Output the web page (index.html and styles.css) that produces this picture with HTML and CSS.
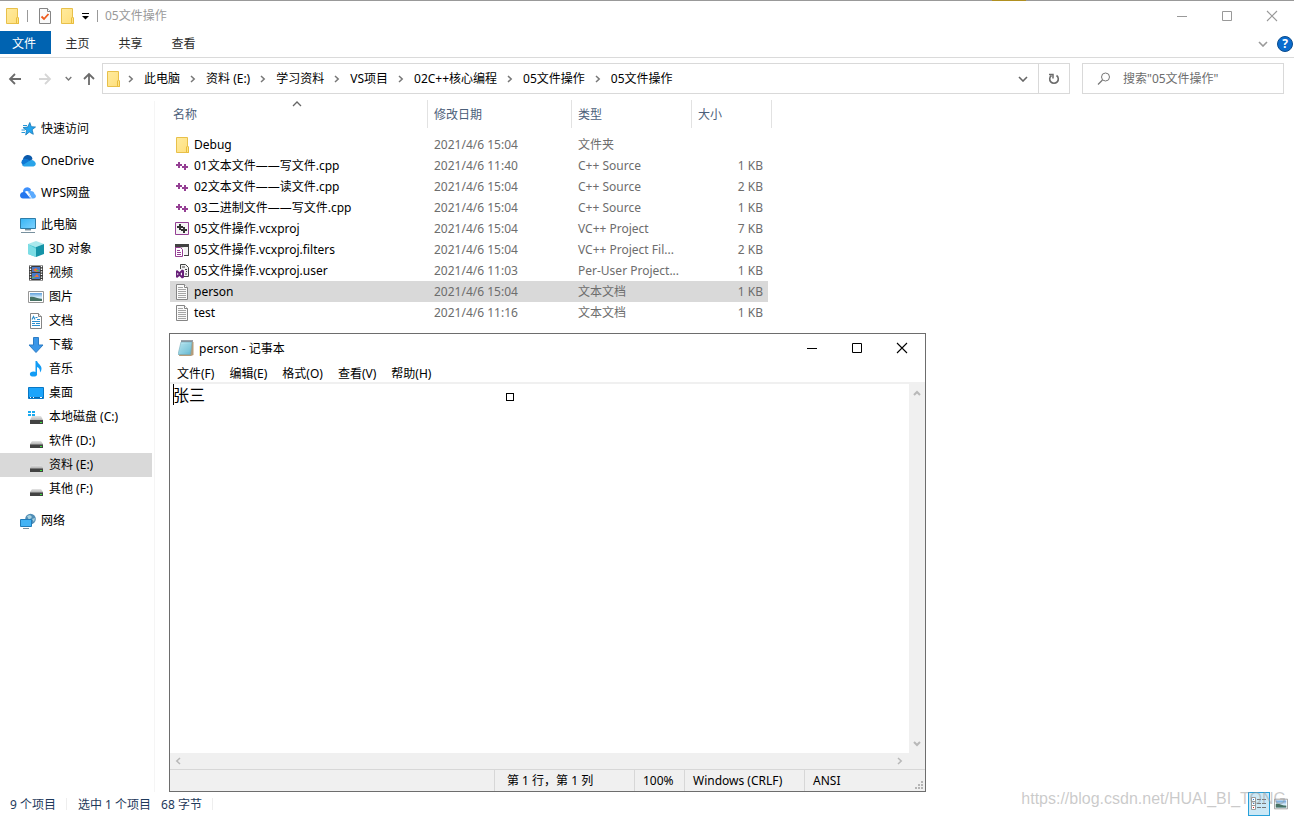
FILE: index.html
```
<!DOCTYPE html>
<html lang="zh-CN">
<head>
<meta charset="utf-8">
<title>05文件操作</title>
<link rel="stylesheet" href="styles.css">
</head>
<body>
<svg class="defs" aria-hidden="true">
  <defs>
    <linearGradient id="gFolder" x1="0" y1="0" x2="1" y2="1"><stop offset="0" stop-color="#ffeb9e"/><stop offset="1" stop-color="#ffdf7c"/></linearGradient>
    <linearGradient id="gSky" x1="0" y1="0" x2="1" y2="1"><stop offset="0" stop-color="#36b4f5"/><stop offset="1" stop-color="#7fd3ff"/></linearGradient>
    <linearGradient id="gDrive" x1="0" y1="0" x2="0" y2="1"><stop offset="0" stop-color="#e6e6e6"/><stop offset="1" stop-color="#b5b5b5"/></linearGradient>
    <linearGradient id="gPad" x1="0" y1="0" x2="1" y2="1"><stop offset="0" stop-color="#c9eef6"/><stop offset="1" stop-color="#5cb4cf"/></linearGradient>
    <linearGradient id="gPic" x1="0" y1="0" x2="0" y2="1"><stop offset="0" stop-color="#5f9fdb"/><stop offset=".55" stop-color="#d7ecfa"/><stop offset="1" stop-color="#7fb0c9"/></linearGradient>
  </defs>
  <symbol id="folder" viewBox="0 0 16 16"><path d="M1.5.5h11v9.5h1v5.500h-12z" fill="url(#gFolder)" stroke="#e8c04a"/><path d="M11.500 15.500V10l1-1 1 1v5.500z" fill="#ffe487" stroke="#e8bd3e"/></symbol>
  <symbol id="check" viewBox="0 0 16 16"><path d="M2.500.500h8l3 3v12h-11z" fill="#fafafa" stroke="#858585"/><path d="M10.500.500v3h3" fill="#fff" stroke="#858585"/><path d="M4.500 8.500l2.500 2.500 4.500-5" fill="none" stroke="#ee5a1c" stroke-width="1.800"/></symbol>
  <symbol id="star" viewBox="0 0 16 16"><path d="M9.800 1.500l1.500 4.200 4.200.300-3.400 2.700 1.200 4.600-4-2.300-3.600 3 .8-4.800L3 6.600l4.700-.500z" fill="#25a6ef" stroke="#1678b8" stroke-width=".8"/><path d="M3 4.500h4M1.500 9h3.500M1.500 11.500h3.500" stroke="#2597d8"/></symbol>
  <symbol id="onedrive" viewBox="0 0 16 16"><path d="M3 7.500A4.800 4.800 0 0 1 12.500 6l-4 4z" fill="#0c5aab"/><path d="M3.500 12.500a3.600 3.600 0 0 1 0-6.500c2-.8 4.500 0 6.500 2L6 12.800z" fill="#1078d4"/><path d="M2 12.500l8-5a3.500 3.500 0 0 1 5 1.500c1.500 1.500.8 4-1.500 4.500H4z" fill="#29a4e9"/></symbol>
  <symbol id="wps" viewBox="0 0 16 16"><path d="M3.500 8.500a4.200 4.200 0 0 1 7.500-4l-1 2.500-4-1-1 4z" fill="#3e91fc"/><path d="M8 7c2-2 6.500-1 6.500 2 2.500 1.500 1.500 4.500-1 4.500h-3z" fill="#5baafe"/><path d="M0 10C.5 7 4 6 6 8l4.500 5.500H3C1 13.500 0 12 0 10z" fill="#2476ee"/><path d="M5 7c2-.5 3 0 4 1.500l2.500 5" stroke="#fff" stroke-width=".8" fill="none"/></symbol>
  <symbol id="pc" viewBox="0 0 16 16"><path d="M.500 1.500h15v10H.500z" fill="url(#gSky)" stroke="#2e7da8"/><path d="M5 12.500h6M1 15.500h14" stroke="#78909e"/><path d="M5 13.500h6" stroke="#c3ced4"/></symbol>
  <symbol id="cube" viewBox="0 0 16 16"><path d="M0 3l8-3 8 3-8 3z" fill="#aae9ed"/><path d="M0 3l8 3v10l-8-3z" fill="#55ccd7"/><path d="M16 3L8 6v10l8-3z" fill="#1594a8"/><path d="M0 3l8 5v8l-8-3z" fill="#7cdde5"/></symbol>
  <symbol id="film" viewBox="0 0 16 16"><path d="M1 .5h14v15H1z" fill="#3a3a3a"/><path d="M4 2h8v5H4z" fill="#4979c9"/><path d="M4 8h8v6H4z" fill="#477bcb"/><path d="M5 5l3-2 3 3-3 1zM6 12l3-3 2 3z" fill="#ee7338"/><path d="M8 5h3v1H8zM4 12h3v1H4z" fill="#62b456"/><path d="M2.500 1v14M13.500 1v14" stroke="#fff" stroke-width="1.400" stroke-dasharray="1.300 1.300"/></symbol>
  <symbol id="picture" viewBox="0 0 16 16"><path d="M.500 2.500h15v11H.500z" fill="#fff" stroke="#969696"/><path d="M2 4h12v8H2z" fill="url(#gPic)"/><path d="M2 8c4-1 7 2 12 2v2H2z" fill="#477264"/></symbol>
  <symbol id="doc" viewBox="0 0 16 16"><path d="M2.500.500h8l3 3v12h-11z" fill="#fff" stroke="#858585"/><path d="M10.500.500v3h3" fill="#eee" stroke="#858585"/><path d="M4 6.500l1.500-3L7 6.500M7.500 4.500h2M9 6.500h3M4 8.500h8M4 10.500h3M8 10.500h4M4 12.500h8" fill="none" stroke="#2e8fce" stroke-width="1.200"/></symbol>
  <symbol id="down" viewBox="0 0 16 16"><path d="M5.500.500h5V8h4.500l-7 7.500L1 8h4.500z" fill="#3b97e8" stroke="#2c7cc5"/></symbol>
  <symbol id="note" viewBox="0 0 16 16"><ellipse cx="5.500" cy="13" rx="3.600" ry="2.600" fill="#129cf5"/><path d="M7.500 0h1.500c1 3 4.500 4 4.500 7.500 0 2-.8 3-1.500 4 .3-3-.8-4.500-3-5.500v7H7.500z" fill="#129cf5"/></symbol>
  <symbol id="desktop" viewBox="0 0 16 16"><path d="M.500 2.500h15v11H.500z" fill="#1ba4fb" stroke="#0877c4"/><path d="M1 12.500h14" stroke="#0a64a8"/><path d="M2 12.500h1M5 12.500h1M12 12.500h2" stroke="#fff"/></symbol>
  <symbol id="drive" viewBox="0 0 16 16"><path d="M4 8h9l2 3H2z" fill="url(#gDrive)"/><path d="M2 11h13v4H2z" fill="#424242"/><path d="M2 11.500h13" stroke="#7a7a7a"/><path d="M12 13h2v1h-2z" fill="#38e23c"/></symbol>
  <symbol id="drivec" viewBox="0 0 16 16"><path d="M4 7h9l2 4H2z" fill="url(#gDrive)"/><path d="M2 11h13v4H2z" fill="#424242"/><path d="M12 13h2v1h-2z" fill="#38e23c"/><path d="M0 1h7v6H0z" fill="#fff"/><path d="M0 2h3v2H0zM4 2h3v2H4zM0 5h3v2H0zM4 5h3v2H4z" fill="#1aaaf0"/></symbol>
  <symbol id="network" viewBox="0 0 16 16"><circle cx="10.500" cy="6" r="5.300" fill="#508db5"/><path d="M7 3l3-1 2 2-3 3zM12 6l3-1-1 4z" fill="#a7d1df"/><path d="M.500 6.500h11v7H.500z" fill="#42b3f5" stroke="#217cb9"/><path d="M3 15.500h6" stroke="#78909e"/></symbol>
  <symbol id="cpp" viewBox="0 0 16 16"><path d="M4 4v6M1 7h6M10 6v6M7 9h6" stroke="#953f94" stroke-width="2" fill="none"/></symbol>
  <symbol id="vcx" viewBox="0 0 16 16"><path d="M.500 1.500h13v12H.500z" fill="#f4f4f4" stroke="#953f94"/><path d="M5 3v6M2 6h6M9 6v6M6 9h6" stroke="#333" stroke-width="2"/></symbol>
  <symbol id="filters" viewBox="0 0 16 16"><path d="M0 2h14v12H9V6H0z" fill="#424242"/><path d="M1 5h12v8H9V6z" fill="#f3f3f3"/><path d="M.500 5.500h5l2 2v7h-7z" fill="#fff" stroke="#953f94"/><path d="M2 8.500h3M2 10.500h4M2 12.500h4" stroke="#953f94"/></symbol>
  <symbol id="vsuser" viewBox="0 0 16 16"><path d="M5.500 6V1.500h5l3 3v9H8" fill="#f1f1f1" stroke="#424242"/><path d="M7 4h3M10 6.500h2M8 8.500h1M11 8.500h1M10 11h2" stroke="#424242"/><path d="M1 8l1-1 2.500 2L7 6.500l2 1v7l-2 1-2.500-2.500L2 15l-1-1zM2.300 9.800v2.500l1.300-1.300zM7 9.300L5.500 11 7 12.700z" fill="#68217a" fill-rule="evenodd"/></symbol>
  <symbol id="txt" viewBox="0 0 16 16"><path d="M1.500.500h8l3 3v12h-11z" fill="#fafafa" stroke="#858585"/><path d="M9.500.500v3h3" fill="#fff" stroke="#858585"/><path d="M3 3.500h5M3 5.500h8M3 7.500h8M3 9.500h8M3 11.500h8M3 13.500h8" stroke="#a5a5a5"/></symbol>
  <symbol id="notepad" viewBox="0 0 16 16"><path d="M4 2h11.500v13L13 16H1z" fill="#b59c7a"/><path d="M3 2h11l-1.500 12.500H0z" fill="url(#gPad)" stroke="#72a9b8" stroke-width=".6"/><path d="M3.500 1h11" stroke="#345" stroke-width="2" stroke-dasharray="1 1"/><path d="M3 5h9.500M2.700 7h9.500M2.300 9h9.500M2 11h9.500" stroke="#8accdc" stroke-width=".6"/></symbol>
  <symbol id="chev-r" viewBox="0 0 6 8"><path d="M1 1l3.200 3L1 7" fill="none" stroke="currentColor" stroke-width="1.500"/></symbol>
  <symbol id="chev-l" viewBox="0 0 6 8"><path d="M5 1L1.800 4 5 7" fill="none" stroke="currentColor" stroke-width="1.500"/></symbol>
  <symbol id="chev-d" viewBox="0 0 10 6"><path d="M1 1l4 4 4-4" fill="none" stroke="currentColor" stroke-width="1.600"/></symbol>
  <symbol id="chev-u" viewBox="0 0 10 6"><path d="M1 5l4-4 4 4" fill="none" stroke="currentColor" stroke-width="1.300"/></symbol>
  <symbol id="scr-u" viewBox="0 0 8 6"><path d="M1 5l3-3 3 3" fill="none" stroke="currentColor" stroke-width="2"/></symbol>
  <symbol id="scr-d" viewBox="0 0 8 6"><path d="M1 1l3 3 3-3" fill="none" stroke="currentColor" stroke-width="2"/></symbol>
  <symbol id="min" viewBox="0 0 12 12"><path d="M1 6.500h10" stroke="currentColor"/></symbol>
  <symbol id="max" viewBox="0 0 12 12"><path d="M1.500 1.500h9v9h-9z" fill="none" stroke="currentColor"/></symbol>
  <symbol id="close" viewBox="0 0 12 12"><path d="M1 1l10 10M11 1L1 11" stroke="currentColor" stroke-width="1.100"/></symbol>
</svg>

<div class="explorer">
  <header class="titlebar">
    <svg class="ic"><use href="#folder"/></svg>
    <i class="tick"></i>
    <button class="plain q1" aria-label="属性"><svg class="ic"><use href="#check"/></svg></button>
    <button class="plain q2" aria-label="新建文件夹"><svg class="ic"><use href="#folder"/></svg></button>
    <button class="plain q3" aria-label="自定义快速访问工具栏"><svg width="7" height="7" viewBox="0 0 7 7"><path d="M0 .500h7" stroke="#000"/><path d="M0 3h7L3.500 6.500z"/></svg></button>
    <i class="tick"></i>
    <h1>05文件操作</h1>
    <div class="caption">
      <button class="plain" aria-label="最小化"><svg class="cap"><use href="#min"/></svg></button>
      <button class="plain" aria-label="最大化"><svg class="cap"><use href="#max"/></svg></button>
      <button class="plain" aria-label="关闭"><svg class="cap"><use href="#close"/></svg></button>
    </div>
    <span class="accent"></span>
  </header>

  <nav class="tabs">
    <button class="plain tab file">文件</button>
    <button class="plain tab">主页</button>
    <button class="plain tab">共享</button>
    <button class="plain tab">查看</button>
    <div class="tabs-end">
      <button class="plain" aria-label="展开功能区"><svg class="cd light"><use href="#chev-d"/></svg></button>
      <button class="plain help" aria-label="帮助">?</button>
    </div>
  </nav>

  <div class="address">
    <div class="nav">
      <button class="plain" aria-label="后退"><svg width="14" height="12" viewBox="0 0 14 12"><path d="M7 1L2 6l5 5M2 6h11" fill="none" stroke="#6b6b6b" stroke-width="1.800"/></svg></button>
      <button class="plain" aria-label="前进"><svg width="14" height="12" viewBox="0 0 14 12"><path d="M7 1l5 5-5 5M12 6H1" fill="none" stroke="#d6d6d6" stroke-width="1.800"/></svg></button>
      <button class="plain" aria-label="最近位置"><svg width="7" height="5" viewBox="0 0 10 6"><path d="M1 1l4 4 4-4" fill="none" stroke="#777" stroke-width="2"/></svg></button>
      <button class="plain" aria-label="上移"><svg width="12" height="14" viewBox="0 0 12 14"><path d="M1 7l5-5 5 5M6 2v11" fill="none" stroke="#6b6b6b" stroke-width="1.800"/></svg></button>
    </div>
    <div class="path">
      <svg class="ic"><use href="#folder"/></svg>
      <svg class="cr"><use href="#chev-r"/></svg><a href="#">此电脑</a>
      <svg class="cr"><use href="#chev-r"/></svg><a href="#">资料 (E:)</a>
      <svg class="cr"><use href="#chev-r"/></svg><a href="#">学习资料</a>
      <svg class="cr"><use href="#chev-r"/></svg><a href="#">VS项目</a>
      <svg class="cr"><use href="#chev-r"/></svg><a href="#">02C++核心编程</a>
      <svg class="cr"><use href="#chev-r"/></svg><a href="#">05文件操作</a>
      <svg class="cr"><use href="#chev-r"/></svg><a href="#">05文件操作</a>
      <button class="plain drop" aria-label="以前的位置"><svg class="cd"><use href="#chev-d"/></svg></button>
      <button class="plain refresh" aria-label="刷新"><svg width="12" height="12" viewBox="0 0 12 12"><path d="M3.500 2.500A4.300 4.300 0 1 0 8.500 2.500" fill="none" stroke="#6b6b6b" stroke-width="1.600"/><path d="M1 1.500h4v4" fill="none" stroke="#6b6b6b" stroke-width="1.500"/></svg></button>
    </div>
    <label class="search">
      <svg width="14" height="14" viewBox="0 0 14 14"><circle cx="8.500" cy="5" r="4" fill="none" stroke="#777"/><path d="M5.500 8L1 12.500" stroke="#777" stroke-width="1.200"/></svg>
      <input type="text" aria-label="搜索" placeholder='搜索"05文件操作"'>
    </label>
  </div>

  <div class="body">
    <aside class="tree">
      <a href="#"><svg class="ic"><use href="#star"/></svg>快速访问</a>
      <a class="gap" href="#"><svg class="ic"><use href="#onedrive"/></svg>OneDrive</a>
      <a class="gap" href="#"><svg class="ic"><use href="#wps"/></svg>WPS网盘</a>
      <a class="gap" href="#"><svg class="ic"><use href="#pc"/></svg>此电脑</a>
      <a class="sub" href="#"><svg class="ic"><use href="#cube"/></svg>3D 对象</a>
      <a class="sub" href="#"><svg class="ic"><use href="#film"/></svg>视频</a>
      <a class="sub" href="#"><svg class="ic"><use href="#picture"/></svg>图片</a>
      <a class="sub" href="#"><svg class="ic"><use href="#doc"/></svg>文档</a>
      <a class="sub" href="#"><svg class="ic"><use href="#down"/></svg>下载</a>
      <a class="sub" href="#"><svg class="ic"><use href="#note"/></svg>音乐</a>
      <a class="sub" href="#"><svg class="ic"><use href="#desktop"/></svg>桌面</a>
      <a class="sub" href="#"><svg class="ic"><use href="#drivec"/></svg>本地磁盘 (C:)</a>
      <a class="sub" href="#"><svg class="ic"><use href="#drive"/></svg>软件 (D:)</a>
      <a class="sub on" href="#"><svg class="ic"><use href="#drive"/></svg>资料 (E:)</a>
      <a class="sub" href="#"><svg class="ic"><use href="#drive"/></svg>其他 (F:)</a>
      <a class="gap" href="#"><svg class="ic"><use href="#network"/></svg>网络</a>
    </aside>
    <main class="files">
      <table>
        <colgroup><col class="c-name"><col class="c-date"><col class="c-type"><col class="c-size"></colgroup>
        <thead><tr><th>名称<svg class="sort"><use href="#chev-u"/></svg></th><th>修改日期</th><th>类型</th><th>大小</th></tr></thead>
        <tbody>
          <tr><td><div class="name"><svg class="ic"><use href="#folder"/></svg>Debug</div></td><td>2021/4/6 15:04</td><td>文件夹</td><td></td></tr>
          <tr><td><div class="name"><svg class="ic"><use href="#cpp"/></svg>01文本文件——写文件.cpp</div></td><td>2021/4/6 11:40</td><td>C++ Source</td><td>1 KB</td></tr>
          <tr><td><div class="name"><svg class="ic"><use href="#cpp"/></svg>02文本文件——读文件.cpp</div></td><td>2021/4/6 15:04</td><td>C++ Source</td><td>2 KB</td></tr>
          <tr><td><div class="name"><svg class="ic"><use href="#cpp"/></svg>03二进制文件——写文件.cpp</div></td><td>2021/4/6 15:04</td><td>C++ Source</td><td>1 KB</td></tr>
          <tr><td><div class="name"><svg class="ic"><use href="#vcx"/></svg>05文件操作.vcxproj</div></td><td>2021/4/6 15:04</td><td>VC++ Project</td><td>7 KB</td></tr>
          <tr><td><div class="name"><svg class="ic"><use href="#filters"/></svg>05文件操作.vcxproj.filters</div></td><td>2021/4/6 15:04</td><td>VC++ Project Fil...</td><td>2 KB</td></tr>
          <tr><td><div class="name"><svg class="ic"><use href="#vsuser"/></svg>05文件操作.vcxproj.user</div></td><td>2021/4/6 11:03</td><td>Per-User Project...</td><td>1 KB</td></tr>
          <tr class="on"><td><div class="name"><svg class="ic"><use href="#txt"/></svg>person</div></td><td>2021/4/6 15:04</td><td>文本文档</td><td>1 KB</td></tr>
          <tr><td><div class="name"><svg class="ic"><use href="#txt"/></svg>test</div></td><td>2021/4/6 11:16</td><td>文本文档</td><td>1 KB</td></tr>
        </tbody>
      </table>
    </main>
  </div>

  <footer class="status">
    <span>9 个项目</span><i></i><span>选中 1 个项目</span><span class="bytes">68 字节</span><i></i>
    <div class="views">
      <button class="plain view on" aria-label="详细信息"><svg width="16" height="16" viewBox="0 0 16 16"><path d="M.500 1.500h4v12h-4zM.500 5.500h4M.500 9.500h4" fill="#fff" stroke="#999"/><path d="M2 3.500h1M2 7.500h1" stroke="#247de0"/><path d="M2 11.500h1" stroke="#d22"/><path d="M6 3.500h4M11 3.500h4M6 7.500h4M11 7.500h4M6 11.500h4M11 11.500h4" stroke="#777"/></svg></button>
      <button class="plain view" aria-label="大缩略图"><svg class="thumb"><use href="#picture"/></svg></button>
    </div>
  </footer>
</div>

<section class="notepad">
  <header class="np-title">
    <svg class="ic"><use href="#notepad"/></svg>
    <h2>person - 记事本</h2>
    <div class="caption">
      <button class="plain" aria-label="最小化"><svg class="cap"><use href="#min"/></svg></button>
      <button class="plain" aria-label="最大化"><svg class="cap"><use href="#max"/></svg></button>
      <button class="plain" aria-label="关闭"><svg class="cap"><use href="#close"/></svg></button>
    </div>
  </header>
  <nav class="np-menu">
    <button class="plain">文件(F)</button><button class="plain">编辑(E)</button><button class="plain">格式(O)</button><button class="plain">查看(V)</button><button class="plain">帮助(H)</button>
  </nav>
  <div class="np-edit">
    <textarea aria-label="文本" spellcheck="false">张三</textarea>
    <span class="caret"></span>
    <span class="pointer"></span>
    <div class="vscroll"><svg class="sv"><use href="#scr-u"/></svg><svg class="sv"><use href="#scr-d"/></svg></div>
  </div>
  <div class="hscroll"><svg class="sr"><use href="#chev-l"/></svg><svg class="sr"><use href="#chev-r"/></svg></div>
  <footer class="np-status">
    <span class="s-pos">第 1 行，第 1 列</span><span class="s-zoom">100%</span><span class="s-eol">Windows (CRLF)</span><span class="s-enc">ANSI</span>
    <svg class="grip" width="9" height="9" viewBox="0 0 9 9"><path d="M6 0h2v2H6zM3 3h2v2H3zM6 3h2v2H6zM0 6h2v2H0zM3 6h2v2H3zM6 6h2v2H6z" fill="#b5b5b5"/></svg>
  </footer>
</section>
<div class="watermark">https://blog.csdn.net/HUAI_BI_TONG</div>
</body>
</html>
```
FILE: styles.css
```
* { box-sizing: border-box; }
body {
  margin: 0;
  background: #fff;
  color: #000;
  font: 12px/16px "Noto Sans", "Noto Sans CJK SC", sans-serif;
  overflow: hidden;
}
h1, h2 { margin: 0; font-size: 12px; font-weight: 400; }
a { color: inherit; text-decoration: none; }
svg { display: block; flex: none; }
.defs { position: absolute; width: 0; height: 0; }
.plain {
  display: flex;
  align-items: center;
  justify-content: center;
  margin: 0;
  padding: 0;
  border: 0;
  background: none;
  color: inherit;
  font: inherit;
}
.ic { width: 16px; height: 16px; }
.cap { width: 12px; height: 12px; }
.cd { width: 10px; height: 6px; color: #666; }
.cr { width: 6px; height: 8px; color: #777; }

.explorer { display: flex; flex-direction: column; height: 100vh; }

.titlebar {
  position: relative;
  display: flex;
  align-items: center;
  height: 31px;
  padding: 0 0 1px 5px;
  border-top: 1px solid #999;
  color: #999;
}
.titlebar .tick { width: 1px; height: 12px; background: #999; }
.titlebar .ic + .tick { margin-left: 6px; }
.q1 { margin-left: 9px; }
.q2 { margin-left: 7px; }
.q3 { margin: 2px 8px 0 6px; }
.titlebar h1 { margin-left: 7px; }
.accent { position: absolute; top: -1px; right: 268px; width: 34px; height: 1px; background: #b09020; }
.caption { display: flex; align-self: stretch; margin-left: auto; }
.caption button { width: 45px; }

.tabs { display: flex; height: 27px; border-bottom: 1px solid #dadada; color: #2b2b2b; }
.tab { width: 53px; height: 23px; padding-top: 2px; }
.tab.file { width: 51px; padding-right: 3px; background: #0063b1; color: #fff; }
.tabs-end { display: flex; align-items: center; gap: 9px; height: 26px; margin: 0 1px 0 auto; }
.light { color: #999; }
.help {
  width: 16px;
  height: 16px;
  border: 1px solid #0a4b8c;
  border-radius: 50%;
  background: #0a6cce;
  color: #fff;
  font-weight: 700;
}

.address { display: flex; padding: 5px 10px 4px 8px; }
.nav { display: flex; align-items: center; width: 94px; }
.nav button + button { margin-left: 16px; }
.nav button:nth-child(3) { margin-left: 13px; }
.nav button:nth-child(4) { margin-left: 11px; }
.path, .search { display: flex; align-items: center; height: 31px; border: 1px solid #d9d9d9; }
.path { flex: 1; padding-left: 3px; white-space: nowrap; }
.path .cr { margin: 0 10px; }
.path .ic + .cr { margin-left: 6px; }
.drop { width: 30px; height: 29px; margin-left: auto; }
.refresh { width: 31px; height: 29px; border-left: 1px solid #d9d9d9; }
.search { width: 202px; margin-left: 12px; padding-left: 14px; gap: 12px; }
.search input { width: 150px; padding: 0; border: 0; outline: 0; font: inherit; }
.search input::placeholder { color: #6d6d6d; opacity: 1; }

.body { display: flex; flex: 1; min-height: 0; }
.tree { width: 155px; margin-top: 3px; padding: 16px 2px 0 0; border-right: 1px solid #f5f5f5; }
.tree a { display: flex; align-items: center; gap: 5px; height: 24px; padding-left: 20px; }
.tree .gap { margin-top: 8px; }
.tree .sub { padding-left: 28px; }
.tree .on { background: #d9d9d9; }

.files { padding: 2px 0 0 15px; }
table { width: 598px; table-layout: fixed; border-collapse: separate; border-spacing: 0; }
.c-name { width: 257px; }
.c-date { width: 144px; }
.c-type { width: 120px; }
.c-size { width: 77px; }
th {
  position: relative;
  height: 28px;
  padding: 2px 6px 0;
  border-left: 1px solid #e2e2e2;
  color: #4c607a;
  font-weight: 400;
  text-align: left;
}
th:first-child { padding-left: 3px; border-left: 0; }
th:last-child::after { content: ""; position: absolute; top: 0; right: -4px; width: 1px; height: 28px; background: #e2e2e2; }
.sort { position: absolute; top: 1px; left: 122px; width: 10px; height: 6px; color: #666; }
tbody::before { content: ""; display: block; height: 6px; }
td { height: 21px; padding: 0 0 0 7px; color: #6d6d6d; white-space: nowrap; }
td:first-child { padding-left: 5px; color: #000; }
td:last-child { padding-right: 5px; text-align: right; }
.name { display: flex; align-items: center; gap: 3px; }
tr.on td { background: #d9d9d9; }

.status { display: flex; align-items: center; height: 24px; padding: 0 2px 0 10px; color: #1e395b; }
.status span { padding-top: 2px; }
.status i { width: 1px; height: 12px; margin: 0 11px 0 10px; background: #eee; }
.status .bytes { margin-left: 10px; }
.views { display: flex; align-self: stretch; margin-left: auto; }
.view { width: 22px; }
.view.on { border: 1px solid #26a0da; background: #cbe8f6; }
.thumb { width: 14px; height: 14px; }

.notepad {
  position: absolute;
  left: 169px;
  top: 333px;
  display: flex;
  flex-direction: column;
  width: 757px;
  height: 459px;
  border: 1px solid #6d6d6d;
  background: #fff;
}
.np-title { display: flex; align-items: center; height: 30px; padding: 0 1px 2px 8px; gap: 5px; }
.np-title h2 { padding-top: 2px; }
.np-menu { display: flex; gap: 15px; height: 18px; padding: 2px 0 0 7px; }
.np-edit { position: relative; display: flex; flex: 1; border-top: 2px solid #f0f0f0; }
.np-edit textarea {
  flex: 1;
  padding: 0 3px;
  border: 0;
  outline: 0;
  resize: none;
  color: #000;
  font: 16px/20px "Noto Sans CJK SC", sans-serif;
}
.caret { position: absolute; left: 3px; top: 0; width: 1px; height: 21px; background: #000; }
.pointer { position: absolute; left: 336px; top: 9px; width: 8px; height: 8px; border: 1px solid #000; }
.vscroll { display: flex; flex-direction: column; justify-content: space-between; align-items: center; width: 16px; padding: 6px 0; background: #f0f0f0; }
.sv { width: 8px; height: 6px; }
.sv, .sr { color: #b8b8b8; }
.hscroll { display: flex; align-items: center; justify-content: space-between; height: 16px; padding: 0 22px 0 5px; background: #f0f0f0; }
.sr { width: 6px; height: 8px; }
.np-status { position: relative; display: flex; justify-content: flex-end; height: 22px; border-top: 1px solid #d7d7d7; background: #f0f0f0; line-height: 21px; }
.np-status span { padding-left: 8px; border-left: 1px solid #d7d7d7; }
.np-status .s-pos { width: 140px; padding-left: 12px; }
.s-zoom { width: 50px; }
.s-eol { width: 120px; }
.s-enc { width: 121px; }
.grip { position: absolute; right: 1px; bottom: 1px; }

.watermark {
  position: absolute;
  right: 8px;
  bottom: 8px;
  color: rgba(150, 150, 150, .5);
  font: 16px/18px "Liberation Sans", sans-serif;
  pointer-events: none;
}
```
